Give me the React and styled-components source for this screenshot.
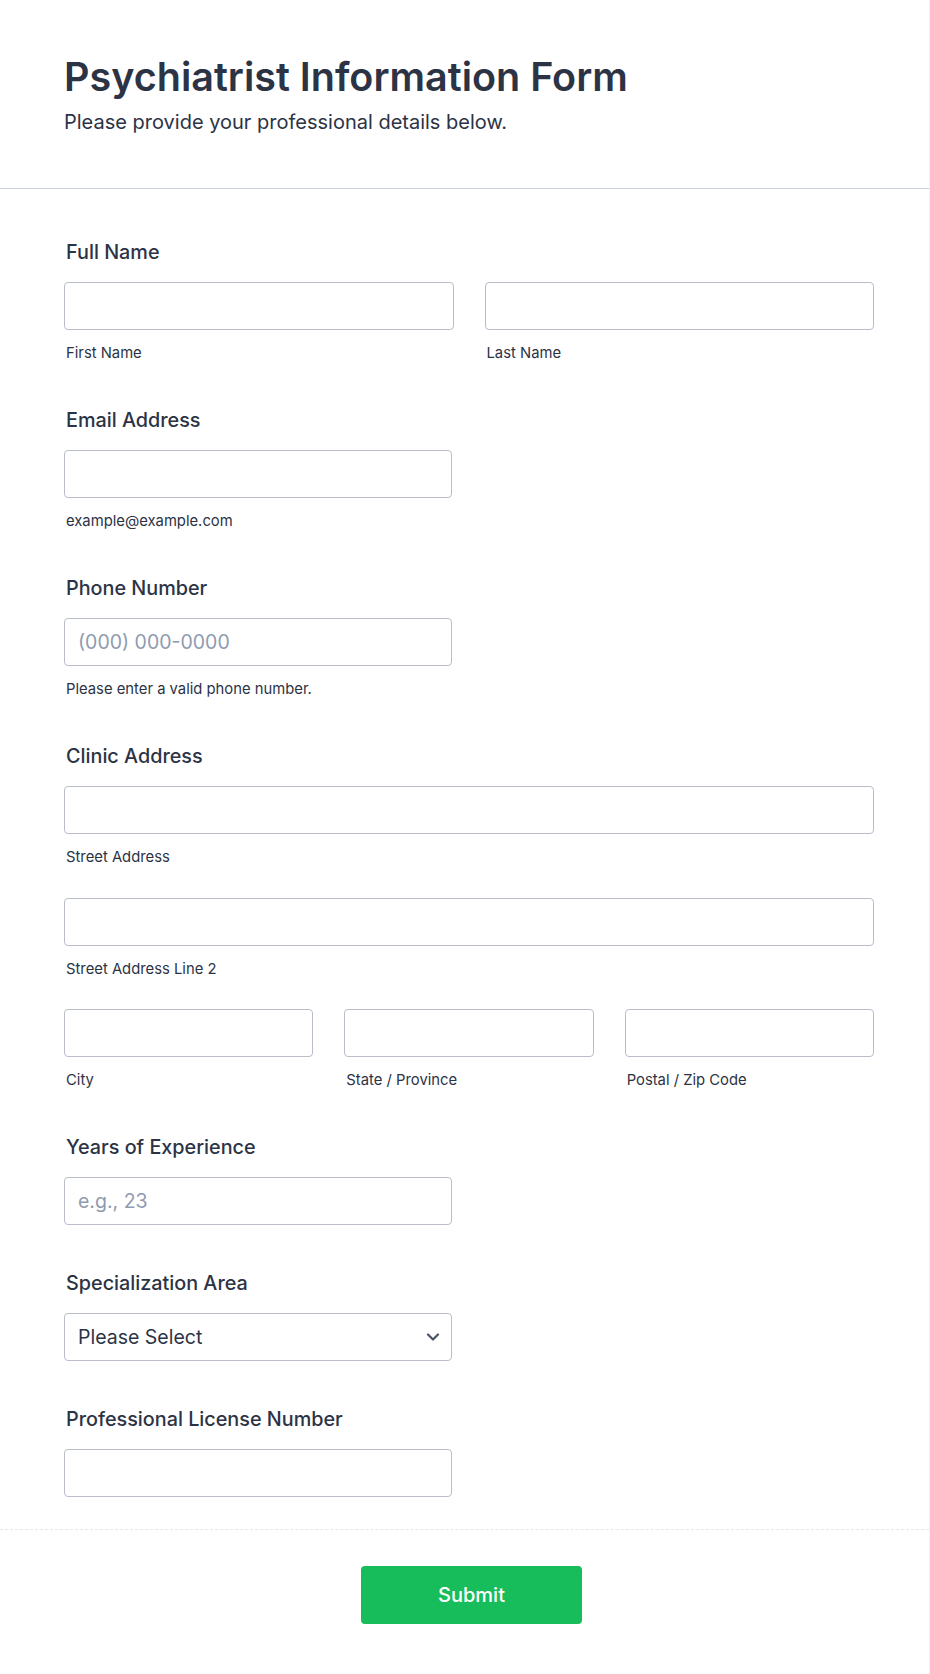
import React from "react"
import styled, { createGlobalStyle } from "styled-components"

const GlobalStyle = createGlobalStyle`
	body {
		margin: 0;
		background: #fff;
		font-family: Inter, "Noto Sans", sans-serif;
		color: #2c3345;
	}
	* {
		box-sizing: border-box;
	}
`

const FormElement = styled.form`
	width: 930px;
	background: #fff;
	border-right: 1px solid #f1f2f7;
`

const HeaderElement = styled.header`
	padding: 53px 55px 52px 64px;
	border-bottom: 1px solid #c9cfdb;
`

const TitleElement = styled.h1`
	margin: 0;
	font-size: 39.5px;
	line-height: 48px;
	font-weight: 600;
	color: #2c3345;
`

const SubtitleElement = styled.p`
	margin: 7px 0 0;
	font-size: 20px;
	line-height: 28px;
	color: #2c3345;
`

const BodyElement = styled.div`
	padding: 51px 55px 32px 64px;
	display: flex;
	flex-direction: column;
	gap: 46px;
	border-bottom: 1px dashed #e4e6ee;
`

const FieldElement = styled.div`
	display: flex;
	flex-direction: column;
`

const LabelElement = styled.label`
	padding-left: 2px;
	font-size: 19.8px;
	line-height: 24px;
	font-weight: 500;
	color: #2c3345;
	margin-bottom: 18px;
`

const RowElement = styled.div`
	display: grid;
	grid-template-columns: repeat(${props => props.columns || 1}, 1fr);
	column-gap: 31px;
	width: ${props => props.half ? "388px" : "100%"};
`

const StackElement = styled.div`
	display: flex;
	flex-direction: column;
	gap: 31.5px;
`

const PartElement = styled.div`
	display: flex;
	flex-direction: column;
`

const InputElement = styled.input`
	width: 100%;
	height: 48px;
	border: 1px solid #b8bdc9;
	border-radius: 4px;
	padding: 0 13px;
	font-family: inherit;
	font-size: 19.5px;
	color: #2c3345;
	background: #fff;
	outline: none;

	&::placeholder {
		color: #8f9bb0;
	}
`

const SubLabelElement = styled.span`
	padding-left: 2px;
	margin-top: 14px;
	font-size: 14.8px;
	line-height: 18px;
	color: #2c3345;
`

const SelectWrapElement = styled.div`
	position: relative;
	width: 388px;
	height: 48px;
`

const SelectElement = styled.select`
	appearance: none;
	width: 100%;
	height: 100%;
	border: 1px solid #b8bdc9;
	border-radius: 4px;
	padding: 0 40px 0 13px;
	font-family: inherit;
	font-size: 19.5px;
	color: #2c3345;
	background: #fff;
	outline: none;
`

const ChevronElement = styled.svg`
	position: absolute;
	right: 12px;
	top: 18px;
	pointer-events: none;
`

const FooterElement = styled.div`
	display: flex;
	justify-content: center;
	padding: 36px 53px 50px 67px;
`

const SubmitElement = styled.button`
	width: 221px;
	height: 58px;
	border: none;
	border-radius: 4px;
	background: #18bd5b;
	color: #fff;
	font-family: inherit;
	font-size: 20px;
	font-weight: 500;
	cursor: pointer;
`

function Part({ sub, placeholder }) {
	return (
		<PartElement>
			<InputElement placeholder={placeholder} />
			{sub && <SubLabelElement>{sub}</SubLabelElement>}
		</PartElement>
	)
}

function Field({ label, children }) {
	return (
		<FieldElement>
			<LabelElement>{label}</LabelElement>
			{children}
		</FieldElement>
	)
}

function App() {
	return (
		<>
			<GlobalStyle />
			<FormElement onSubmit={e => e.preventDefault()}>
				<HeaderElement>
					<TitleElement>Psychiatrist Information Form</TitleElement>
					<SubtitleElement>Please provide your professional details below.</SubtitleElement>
				</HeaderElement>

				<BodyElement>
					<Field label="Full Name">
						<RowElement columns={2}>
							<Part sub="First Name" />
							<Part sub="Last Name" />
						</RowElement>
					</Field>

					<Field label="Email Address">
						<RowElement half>
							<Part sub="example@example.com" />
						</RowElement>
					</Field>

					<Field label="Phone Number">
						<RowElement half>
							<Part sub="Please enter a valid phone number." placeholder="(000) 000-0000" />
						</RowElement>
					</Field>

					<Field label="Clinic Address">
						<StackElement>
							<RowElement>
								<Part sub="Street Address" />
							</RowElement>
							<RowElement>
								<Part sub="Street Address Line 2" />
							</RowElement>
							<RowElement columns={3}>
								<Part sub="City" />
								<Part sub="State / Province" />
								<Part sub="Postal / Zip Code" />
							</RowElement>
						</StackElement>
					</Field>

					<Field label="Years of Experience">
						<RowElement half>
							<Part placeholder="e.g., 23" />
						</RowElement>
					</Field>

					<Field label="Specialization Area">
						<SelectWrapElement>
							<SelectElement defaultValue="">
								<option value="">Please Select</option>
								<option>Child & Adolescent Psychiatry</option>
								<option>Adult Psychiatry</option>
								<option>Geriatric Psychiatry</option>
								<option>Addiction Psychiatry</option>
								<option>Forensic Psychiatry</option>
							</SelectElement>
							<ChevronElement width="14" height="12" viewBox="0 0 14 12">
								<path d="M2 3.5 L7 8.5 L12 3.5" fill="none" stroke="#4a5265" strokeWidth="2.2" strokeLinecap="round" strokeLinejoin="round" />
							</ChevronElement>
						</SelectWrapElement>
					</Field>

					<Field label="Professional License Number">
						<RowElement half>
							<Part />
						</RowElement>
					</Field>
				</BodyElement>

				<FooterElement>
					<SubmitElement type="submit">Submit</SubmitElement>
				</FooterElement>
			</FormElement>
		</>
	)
}

export default App
